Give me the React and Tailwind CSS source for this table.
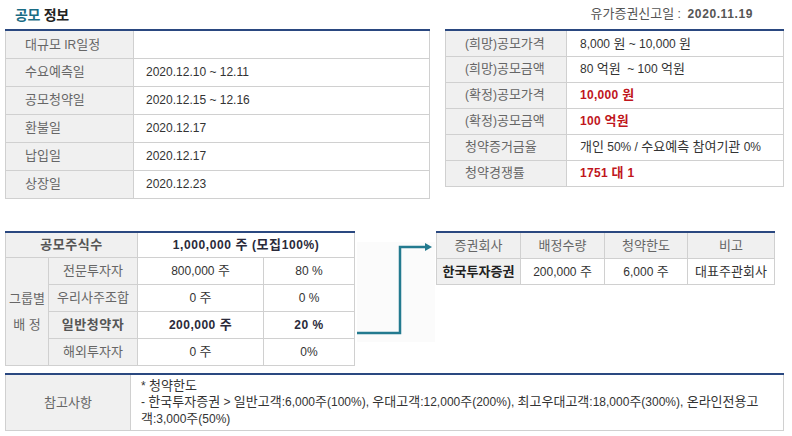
import React from "react";

const F = { fontFamily: '"Liberation Sans", "Noto Sans CJK KR", sans-serif' };

function T({ s }) {
  const parts = s.split(/([\uac00-\ud7a3]+)/);
  return (
    <>
      {parts.map((p, i) =>
        /[\uac00-\ud7a3]/.test(p) ? (
          <span key={i} className="text-[13px]">
            {p}
          </span>
        ) : (
          <React.Fragment key={i}>{p}</React.Fragment>
        )
      )}
    </>
  );
}

const topLeft = [
  ["대규모 IR일정", ""],
  ["수요예측일", "2020.12.10 ~ 12.11"],
  ["공모청약일", "2020.12.15 ~ 12.16"],
  ["환불일", "2020.12.17"],
  ["납입일", "2020.12.17"],
  ["상장일", "2020.12.23"],
];

const topRight = [
  ["(희망)공모가격", "8,000 원 ~ 10,000 원", false],
  ["(희망)공모금액", "80 억원  ~ 100 억원", false],
  ["(확정)공모가격", "10,000 원", true],
  ["(확정)공모금액", "100 억원", true],
  ["청약증거금율", "개인 50% / 수요예측 참여기관 0%", false],
  ["청약경쟁률", "1751 대 1", true],
];

const LBL = "border border-[#d0d0d0] bg-[#f0f0f0] text-[#666] p-0";
const VAL = "border border-[#d0d0d0] p-0";

export default function App() {
  return (
    <div
      className="w-[792px] h-[436px] bg-white text-[12px] text-[#333] overflow-hidden"
      style={F}
    >
      {/* header */}
      <div className="h-[29px] flex items-center justify-between pl-[15px] pr-[39px] pt-[1px]">
        <div className="text-[14px] font-bold tracking-[-0.3px]">
          <span className="text-[#1a6c85]">공모</span>{" "}
          <span className="text-[#222]">정보</span>
        </div>
        <div className="text-[#555] text-[12px] pb-[3px] whitespace-pre">
          <T s="유가증권신고일 :  " />
          <span className="font-bold tracking-[0.6px]">2020.11.19</span>
        </div>
      </div>

      {/* top tables */}
      <div className="flex pl-[5px] gap-[15px] items-start">
        <table className="w-[425px] table-fixed border-collapse border-t-2 border-t-[#2a4880]">
          <colgroup>
            <col className="w-[128px]" />
            <col />
          </colgroup>
          <tbody>
            {topLeft.map(([k, v]) => (
              <tr key={k} className="h-[28px]">
                <td className={`${LBL} pl-[19px]`}>
                  <T s={k} />
                </td>
                <td className={`${VAL} pl-[12px]`}>{v}</td>
              </tr>
            ))}
          </tbody>
        </table>

        <table className="w-[339px] table-fixed border-collapse border-t-2 border-t-[#2a4880]">
          <colgroup>
            <col className="w-[121px]" />
            <col />
          </colgroup>
          <tbody>
            {topRight.map(([k, v, red]) => (
              <tr key={k} className="h-[26px]">
                <td className={`${LBL} pl-[19px]`}>
                  <T s={k} />
                </td>
                <td
                  className={
                    red
                      ? `${VAL} pl-[13px] whitespace-pre font-bold text-[#c0161c] tracking-[0.3px]`
                      : `${VAL} pl-[13px] whitespace-pre`
                  }
                >
                  <T s={v} />
                </td>
              </tr>
            ))}
          </tbody>
        </table>
      </div>

      {/* middle */}
      <div className="flex pl-[5px] mt-[32px] items-start">
        <table className="w-[350px] table-fixed border-collapse border-t-2 border-t-[#2a4880] text-center">
          <colgroup>
            <col className="w-[43px]" />
            <col className="w-[89px]" />
            <col className="w-[126px]" />
            <col />
          </colgroup>
          <tbody>
            <tr className="h-[26px]">
              <td colSpan={2} className="border border-[#d0d0d0] bg-[#f0f0f0] text-[#555] font-bold p-0 tracking-[0.5px]">
                <T s="공모주식수" />
              </td>
              <td colSpan={2} className="border border-[#d0d0d0] font-bold text-[#2a2a3a] p-0 tracking-[0.6px] whitespace-nowrap">
                <T s="1,000,000 주 (모집100%)" />
              </td>
            </tr>
            <tr className="h-[27px]">
              <td rowSpan={4} className={`${LBL} leading-[26px]`}>
                <T s="그룹별" />
                <br />
                <T s="배 정" />
              </td>
              <td className={LBL}>
                <T s="전문투자자" />
              </td>
              <td className={VAL}>
                <T s="800,000 주" />
              </td>
              <td className={VAL}>80 %</td>
            </tr>
            <tr className="h-[27px]">
              <td className={`${LBL} whitespace-nowrap`}>
                <T s="우리사주조합" />
              </td>
              <td className={VAL}>
                <T s="0 주" />
              </td>
              <td className={VAL}>0 %</td>
            </tr>
            <tr className="h-[27px]">
              <td className="border border-[#d0d0d0] bg-[#f0f0f0] text-[#555] font-bold p-0 tracking-[0.5px]">
                <T s="일반청약자" />
              </td>
              <td className="border border-[#d0d0d0] font-bold text-[#2a2a3a] p-0 tracking-[0.5px]">
                <T s="200,000 주" />
              </td>
              <td className="border border-[#d0d0d0] font-bold text-[#2a2a3a] p-0 tracking-[0.5px]">20 %</td>
            </tr>
            <tr className="h-[27px]">
              <td className={LBL}>
                <T s="해외투자자" />
              </td>
              <td className={VAL}>
                <T s="0 주" />
              </td>
              <td className={VAL}>0%</td>
            </tr>
          </tbody>
        </table>

        <div className="w-[81px] h-[136px] shrink-0">
          <svg width="81" height="136" viewBox="0 0 81 136">
            <rect x="2" y="11" width="78" height="100" fill="#fbfbfb" />
            <polyline
              points="2,102 45,102 45,16 73,16"
              fill="none"
              stroke="#237a8f"
              strokeWidth="2.5"
            />
            <polygon points="70,12 77,16 70,20" fill="#237a8f" />
          </svg>
        </div>

        <table className="w-[339px] table-fixed border-collapse border-t-2 border-t-[#2a4880] text-center">
          <colgroup>
            <col className="w-[84px]" />
            <col className="w-[84px]" />
            <col className="w-[83px]" />
            <col />
          </colgroup>
          <tbody>
            <tr className="h-[27px]">
              <td className={LBL}>
                <T s="증권회사" />
              </td>
              <td className={LBL}>
                <T s="배정수량" />
              </td>
              <td className={LBL}>
                <T s="청약한도" />
              </td>
              <td className={LBL}>
                <T s="비고" />
              </td>
            </tr>
            <tr className="h-[26px]">
              <td className="border border-[#d0d0d0] bg-[#f0f0f0] text-[#222] font-bold p-0 whitespace-nowrap">
                <T s="한국투자증권" />
              </td>
              <td className={VAL}>
                <T s="200,000 주" />
              </td>
              <td className={VAL}>
                <T s="6,000 주" />
              </td>
              <td className={`${VAL} whitespace-nowrap`}>
                <T s="대표주관회사" />
              </td>
            </tr>
          </tbody>
        </table>
      </div>

      {/* bottom */}
      <div className="pl-[5px] mt-[6px]">
        <table className="w-[779px] table-fixed border-collapse border-t-2 border-t-[#2a4880]">
          <colgroup>
            <col className="w-[125px]" />
            <col />
          </colgroup>
          <tbody>
            <tr className="h-[56px]">
              <td className={`${LBL} text-center`}>
                <T s="참고사항" />
              </td>
              <td className="border border-[#d0d0d0] pl-[10px] pr-[4px] py-[3px] leading-[15.5px] whitespace-nowrap">
                <T s="* 청약한도" />
                <br />
                <T s="- 한국투자증권 > 일반고객:6,000주(100%), 우대고객:12,000주(200%), 최고우대고객:18,000주(300%), 온라인전용고" />
                <br />
                <T s="객:3,000주(50%)" />
              </td>
            </tr>
          </tbody>
        </table>
      </div>
    </div>
  );
}
